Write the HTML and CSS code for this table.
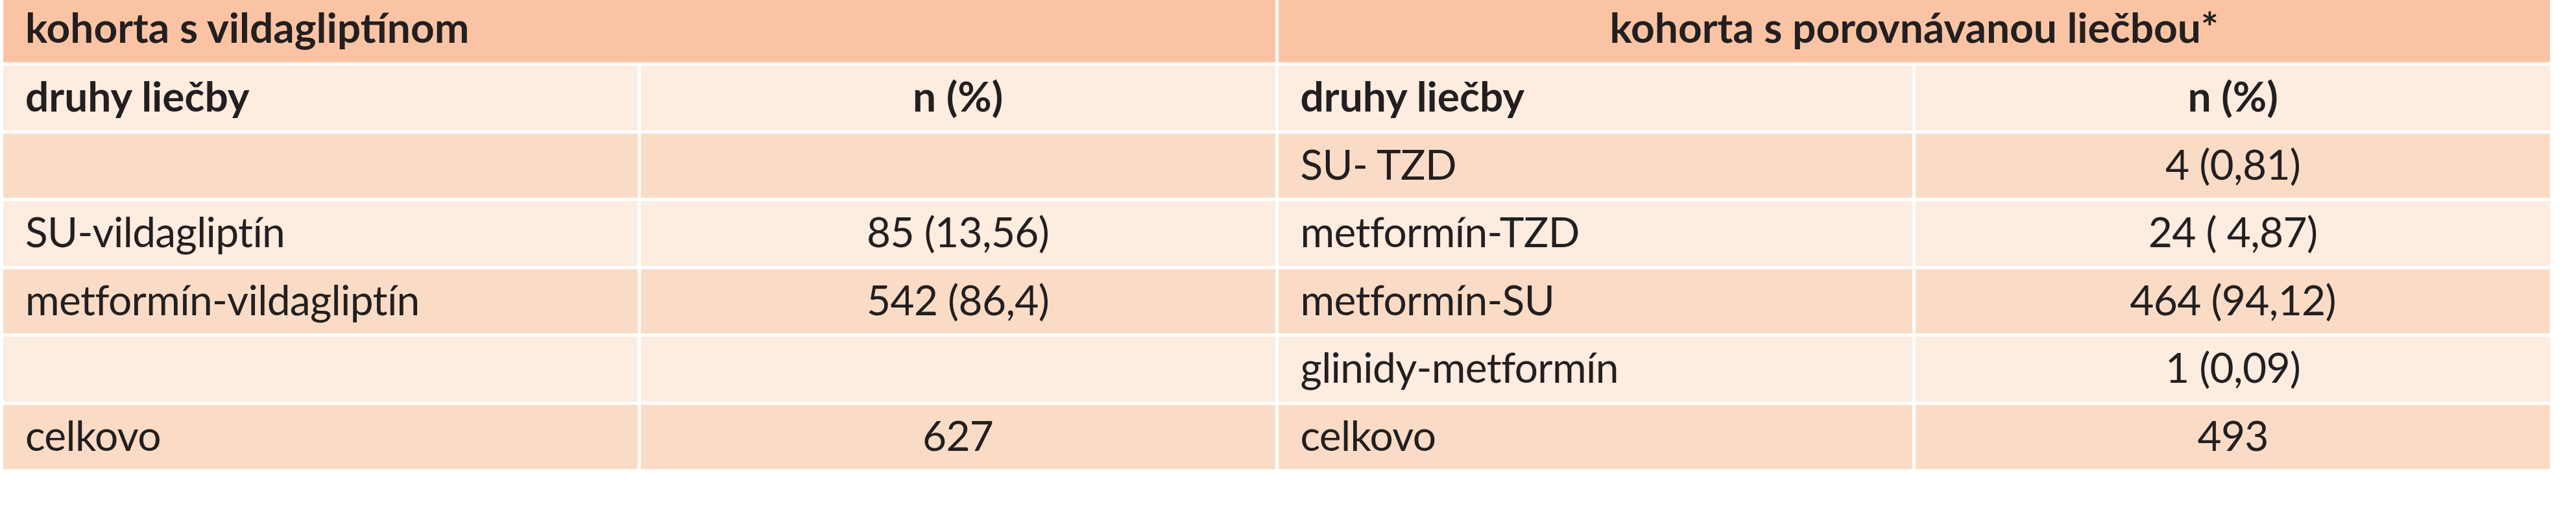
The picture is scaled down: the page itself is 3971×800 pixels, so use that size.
FILE: index.html
```html
<!DOCTYPE html>
<html lang="sk">
<head>
<meta charset="utf-8">
<title>Kohorty liečby</title>
<link rel="stylesheet" href="styles.css">
</head>
<body>
<div class="wrap">
<table class="tbl">
  <thead>
    <tr class="head">
      <th colspan="2" class="left">kohorta s vildagliptínom</th>
      <th colspan="2" class="center">kohorta s porovnávanou liečbou*</th>
    </tr>
  </thead>
  <tbody>
    <tr class="light sub">
      <td>druhy liečby</td>
      <td class="num">n (%)</td>
      <td>druhy liečby</td>
      <td class="num">n (%)</td>
    </tr>
    <tr class="mid">
      <td></td>
      <td class="num"></td>
      <td>SU- TZD</td>
      <td class="num">4 (0,81)</td>
    </tr>
    <tr class="light">
      <td>SU-vildagliptín</td>
      <td class="num">85 (13,56)</td>
      <td>metformín-TZD</td>
      <td class="num">24 ( 4,87)</td>
    </tr>
    <tr class="mid">
      <td>metformín-vildagliptín</td>
      <td class="num">542 (86,4)</td>
      <td>metformín-SU</td>
      <td class="num">464 (94,12)</td>
    </tr>
    <tr class="light">
      <td></td>
      <td class="num"></td>
      <td>glinidy-metformín</td>
      <td class="num">1 (0,09)</td>
    </tr>
    <tr class="mid">
      <td>celkovo</td>
      <td class="num">627</td>
      <td>celkovo</td>
      <td class="num">493</td>
    </tr>
  </tbody>
</table>
</div>
</body>
</html>
```
FILE: styles.css
```css
html, body {
  margin: 0;
  padding: 0;
  background: #ffffff;
}

body {
  font-family: "Lato", "Liberation Sans", sans-serif;
  color: #231f20;
}

.wrap {
  margin-top: -5px;
}

.tbl {
  width: 3936px;
  table-layout: fixed;
  border-collapse: separate;
  border-spacing: 5px;
}

.tbl th,
.tbl td {
  font-size: 64px;
  line-height: 64px;
  vertical-align: top;
  white-space: nowrap;
}

.tbl th {
  font-weight: 700;
  height: 86px;
  padding: 10px 34px 0;
  background: #fac4a4;
}

.tbl td {
  font-weight: 400;
  letter-spacing: -0.65px;
  height: 84.5px;
  padding: 15px 34px 0;
}

.tbl th.left {
  text-align: left;
}

.tbl th.center {
  text-align: center;
}

.tbl td.num {
  text-align: center;
}

.tbl tr.sub td {
  font-weight: 700;
  letter-spacing: 0;
}

.tbl tr.light td {
  background: #fdece0;
}

.tbl tr.mid td {
  background: #fadcc6;
}
```
